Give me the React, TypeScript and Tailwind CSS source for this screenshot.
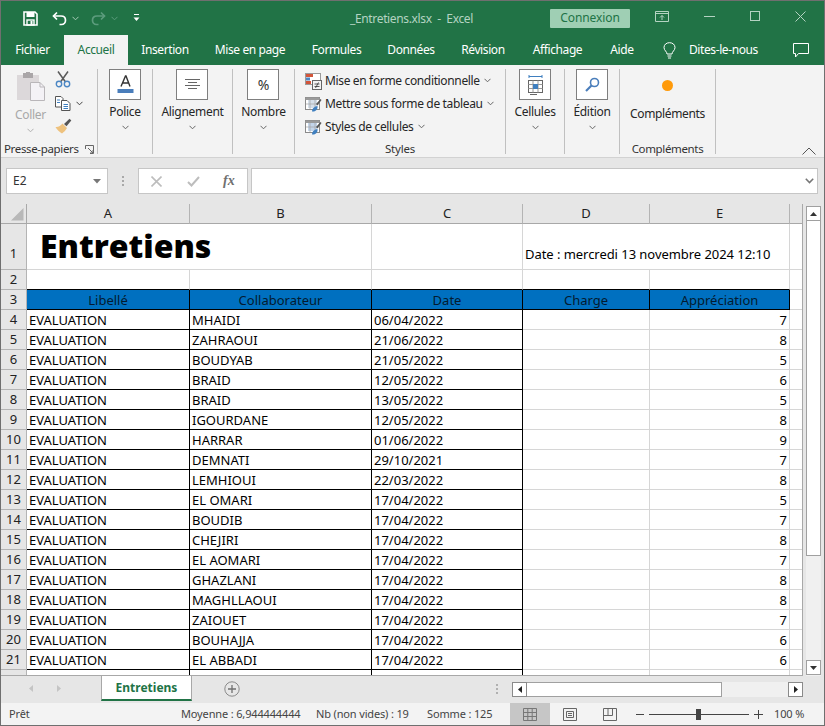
import React from "react";

const rows: [number, string, string, string, string][] = [
  [4, "EVALUATION", "MHAIDI", "06/04/2022", "7"],
  [5, "EVALUATION", "ZAHRAOUI", "21/06/2022", "8"],
  [6, "EVALUATION", "BOUDYAB", "21/05/2022", "5"],
  [7, "EVALUATION", "BRAID", "12/05/2022", "6"],
  [8, "EVALUATION", "BRAID", "13/05/2022", "5"],
  [9, "EVALUATION", "IGOURDANE", "12/05/2022", "8"],
  [10, "EVALUATION", "HARRAR", "01/06/2022", "9"],
  [11, "EVALUATION", "DEMNATI", "29/10/2021", "7"],
  [12, "EVALUATION", "LEMHIOUI", "22/03/2022", "8"],
  [13, "EVALUATION", "EL OMARI", "17/04/2022", "5"],
  [14, "EVALUATION", "BOUDIB", "17/04/2022", "7"],
  [15, "EVALUATION", "CHEJIRI", "17/04/2022", "8"],
  [16, "EVALUATION", "EL AOMARI", "17/04/2022", "7"],
  [17, "EVALUATION", "GHAZLANI", "17/04/2022", "8"],
  [18, "EVALUATION", "MAGHLLAOUI", "17/04/2022", "8"],
  [19, "EVALUATION", "ZAIOUET", "17/04/2022", "7"],
  [20, "EVALUATION", "BOUHAJJA", "17/04/2022", "6"],
  [21, "EVALUATION", "EL ABBADI", "17/04/2022", "6"],
];

const head = "flex items-center justify-center bg-[#e6e6e6] border-r border-b border-[#b4b4b4] text-[#222]";
const colHead = "flex items-center justify-center bg-[#e6e6e6] border-b border-[#a8a8a8] h-[20px] relative text-[#222] text-[13px]";
const black = "h-[20px] border-r border-b border-black px-[2px] leading-[20px] text-[13px] text-black truncate";
const light = "h-[20px] border-r border-b border-[#d6d6d6] px-[2px] leading-[20px] text-[13px] text-black text-right";
const blue = "h-[20px] border-r border-b border-black bg-[#0070c0] text-center leading-[20px] text-[13px] text-[#041b30]";

function Chevron({ color = "#666", className = "" }: { color?: string; className?: string }) {
  return (
    <svg width="7" height="5" viewBox="0 0 7 5" className={className}>
      <path d="M0.5 0.8 L3.5 3.8 L6.5 0.8" fill="none" stroke={color} strokeWidth="1" />
    </svg>
  );
}

function BoxButton({ label, children }: { label: string; children: React.ReactNode }) {
  return (
    <div className="flex flex-col items-center">
      <div className="w-[32px] h-[31px] bg-white border border-[#7f7f7f] flex items-center justify-center">{children}</div>
      <div className="mt-[4px] text-[12px] tracking-[-0.3px] leading-[16px] text-[#262626] whitespace-nowrap">{label}</div>
      <Chevron className="mt-[5px]" />
    </div>
  );
}

function StyleRow({ icon, label }: { icon: React.ReactNode; label: string }) {
  return (
    <div className="flex items-center h-[23px]">
      <div className="w-[16px] h-[16px] mr-[4px]">{icon}</div>
      <span className="text-[12px] tracking-[-0.35px] leading-[16px] text-[#262626] whitespace-nowrap">{label}</span>
      <Chevron className="ml-[4px]" />
    </div>
  );
}

function TableBrushIcon({ fill }: { fill: string }) {
  return (
    <svg width="17" height="17" viewBox="0 0 17 17">
      <rect x="0.5" y="1.5" width="14" height="12" fill="#fff" stroke="#8a8a8a" />
      <rect x="0.5" y="1.5" width="14" height="2.5" fill="#9a9a9a" />
      <rect x="3" y="4" width="9" height="8" fill={fill} />
      <path d="M5 4v9M10 4v9M1 8h13" stroke="#a5a5a5" strokeWidth="0.7" />
      <path d="M11 8 L15.5 3 L16.5 4 L12.5 9.5Z" fill="#555" />
      <path d="M7 15.5 C7 12 10 10.5 12.5 10 C13 13 11 16 7 15.5Z" fill="#3f7fbf" />
    </svg>
  );
}

export default function App() {
  return (
    <div className="w-[825px] h-[726px] border border-[#6f6f6f] flex flex-col overflow-hidden bg-[#e6e6e6] font-['Noto_Sans',sans-serif]">
      {/* Title bar */}
      <div className="h-[34px] bg-[#217346] flex items-center shrink-0">
        <div className="w-[349px] flex items-center pl-[22px]">
          <svg width="15" height="15" viewBox="0 0 15 15">
            <path d="M1 1 H12 L14 3 V14 H1Z" fill="none" stroke="#fff" strokeWidth="1.6" />
            <rect x="3.5" y="1" width="8" height="5" fill="#fff" />
            <rect x="4" y="9" width="7" height="5" fill="none" stroke="#fff" strokeWidth="1.4" />
            <rect x="7.5" y="10" width="2" height="3.5" fill="#fff" />
          </svg>
          <svg width="15" height="15" viewBox="0 0 15 15" className="ml-[14px]">
            <path d="M5 1.5 L1.5 5 L5 8.5" fill="none" stroke="#fff" strokeWidth="1.7" />
            <path d="M1.5 5 H9 C12 5 13.5 7 13.5 9.2 C13.5 11.5 12 13.5 9.5 13.5 H7.5" fill="none" stroke="#fff" strokeWidth="1.7" />
          </svg>
          <Chevron color="#a9cbb7" className="ml-[5px]" />
          <svg width="15" height="15" viewBox="0 0 15 15" className="ml-[12px]">
            <path d="M10 1.5 L13.5 5 L10 8.5" fill="none" stroke="#5c9c7d" strokeWidth="1.7" />
            <path d="M13.5 5 H6 C3 5 1.5 7 1.5 9.2 C1.5 11.5 3 13.5 5.5 13.5 H7.5" fill="none" stroke="#5c9c7d" strokeWidth="1.7" />
          </svg>
          <Chevron color="#5c9c7d" className="ml-[5px]" />
          <svg width="7" height="8" viewBox="0 0 7 8" className="ml-[15px]">
            <rect x="1" y="0" width="5" height="1" fill="#fff" />
            <path d="M0.5 3.5 H6.5 L3.5 7Z" fill="#fff" />
          </svg>
        </div>
        <div className="w-[200px] mt-[1px] text-[12px] tracking-[-0.35px] text-[#b4d3c2] whitespace-pre">_Entretiens.xlsx  -  Excel</div>
        <div className="w-[80px] h-[19px] bg-[#9fcfb4] rounded-[1px] flex items-center justify-center text-[12px] tracking-[-0.1px] text-[#217346]">Connexion</div>
        <svg width="14" height="11" viewBox="0 0 14 11" className="ml-[25px] -mt-[4px]">
          <path d="M0.5 0.5H13.5V10.5H0.5Z M0.5 2.5H13.5" fill="none" stroke="#b4d3c2" />
          <path d="M7 9V4.5M5 6.5L7 4.5L9 6.5" fill="none" stroke="#b4d3c2" />
        </svg>
        <div className="ml-[35px] w-[11px] h-[1px] -mt-[4px] bg-[#b4d3c2]" />
        <div className="ml-[35px] w-[10px] h-[10px] -mt-[4px] border border-[#b4d3c2]" />
        <svg width="11" height="11" viewBox="0 0 11 11" className="ml-[35px] -mt-[4px]">
          <path d="M0.5 0.5L10.5 10.5M10.5 0.5L0.5 10.5" stroke="#b4d3c2" />
        </svg>
      </div>

      {/* Tabs */}
      <div className="h-[30px] bg-[#217346] flex items-stretch shrink-0 text-[12px] tracking-[-0.4px] text-white">
        <div className="w-[63px] flex items-center justify-center">Fichier</div>
        <div className="w-[64px] bg-[#f3f3f3] text-[#217346] flex items-center justify-center">Accueil</div>
        <div className="w-[74px] flex items-center justify-center">Insertion</div>
        <div className="w-[96px] flex items-center justify-center">Mise en page</div>
        <div className="w-[77px] flex items-center justify-center">Formules</div>
        <div className="w-[72px] flex items-center justify-center">Données</div>
        <div className="w-[72px] flex items-center justify-center">Révision</div>
        <div className="w-[77px] flex items-center justify-center">Affichage</div>
        <div className="w-[52px] flex items-center justify-center">Aide</div>
        <div className="ml-[15px] flex items-center">
          <svg width="13" height="17" viewBox="0 0 13 17">
            <path d="M4 12 C4 9.5 1 8.5 1 5.5 C1 2.5 3.5 0.7 6.5 0.7 C9.5 0.7 12 2.5 12 5.5 C12 8.5 9 9.5 9 12Z" fill="none" stroke="#fff" />
            <path d="M4.5 14H8.5M5 16H8" stroke="#fff" />
          </svg>
        </div>
        <div className="ml-[13px] w-[71px] whitespace-nowrap flex items-center">Dites-le-nous</div>
        <div className="ml-[33px] flex items-center">
          <svg width="16" height="15" viewBox="0 0 16 15">
            <path d="M0.5 0.5H15.5V10.5H5.5L2.5 14V10.5H0.5Z" fill="none" stroke="#fff" />
          </svg>
        </div>
      </div>

      {/* Ribbon */}
      <div className="h-[93px] shrink-0 bg-[#f3f3f3] border-b border-[#d2d2d2] flex items-start pt-[4px]">
        <div className="w-[97px] h-[85px] border-r border-[#c0c0c0] flex flex-col shrink-0">
          <div className="flex">
            <div className="w-[53px] pl-[6px] flex flex-col items-center pt-[3px]">
              <svg width="29" height="29" viewBox="0 0 29 29">
                <rect x="1" y="3" width="22" height="25" fill="#dcd8da" />
                <rect x="7" y="1" width="10" height="5" fill="#aaa6a8" />
                <rect x="10" y="0" width="4" height="2" fill="#aaa6a8" />
                <path d="M14.5 10.5H24L28.5 15V28.5H14.5Z" fill="#f4f2f6" stroke="#b9b6b9" />
                <path d="M24 10.5V15H28.5" fill="none" stroke="#b9b6b9" />
              </svg>
              <div className="mt-[6px] text-[12px] tracking-[-0.3px] leading-[16px] text-[#a8a8a8]">Coller</div>
              <Chevron color="#b0b0b0" className="mt-[5px]" />
            </div>
            <div className="flex flex-col pt-[2px] pl-[1px]">
              <svg width="16" height="17" viewBox="0 0 16 17">
                <path d="M3 0.5L10.5 11M13 0.5L5.5 11" stroke="#5a5a5a" strokeWidth="1.5" />
                <circle cx="4" cy="13" r="2.7" fill="none" stroke="#4c87c4" strokeWidth="1.4" />
                <circle cx="12" cy="13" r="2.7" fill="none" stroke="#4c87c4" strokeWidth="1.4" />
              </svg>
              <div className="flex items-center mt-[8px]">
                <svg width="16" height="15" viewBox="0 0 16 15">
                  <path d="M0.5 0.5H6L8 2.5V11H0.5Z" fill="#fff" stroke="#555" />
                  <path d="M6.5 4.5H12L15 7.5V14.5H6.5Z" fill="#fff" stroke="#555" />
                  <path d="M2 4H5M2 6.5H5M8.5 8.5H13M8.5 10.5H13M8.5 12.5H13" stroke="#3f7fbf" />
                </svg>
                <Chevron color="#444" className="ml-[5px]" />
              </div>
              <svg width="17" height="16" viewBox="0 0 17 16" className="mt-[7px]">
                <path d="M9 6 L14.5 0.8 L16.3 2.6 L11.5 8.3Z" fill="#555" />
                <path d="M0.5 9 C3 9.5 6 7.5 7.5 5.5 L12 10 C10.5 12.5 9 14 7 15.5 C4.5 14 2 12 0.5 9Z" fill="#eec27e" />
              </svg>
            </div>
          </div>
          <div className="mt-auto -mb-[3px] pl-[3px] flex items-center justify-between pr-[3px] text-[11.5px] tracking-[-0.35px] leading-[16px] text-[#333]">
            <span>Presse-papiers</span>
            <svg width="9" height="9" viewBox="0 0 9 9">
              <path d="M0.5 4V0.5H8.5V8.5H5M3 3L8 8M8 5V8H5" fill="none" stroke="#666" />
            </svg>
          </div>
        </div>

        <div className="w-[55px] h-[85px] border-r border-[#c0c0c0] flex justify-center shrink-0">
          <BoxButton label="Police">
            <svg width="17" height="19" viewBox="0 0 17 19">
              <path d="M4 11.5L8.5 1H9L13 11.5M5.5 8H11.8" fill="none" stroke="#333" strokeWidth="1.4" />
              <rect x="0.5" y="14" width="16" height="4" fill="#4a7ebb" />
            </svg>
          </BoxButton>
        </div>
        <div className="w-[80px] h-[85px] border-r border-[#c0c0c0] flex justify-center shrink-0">
          <BoxButton label="Alignement">
            <svg width="15" height="11" viewBox="0 0 15 11">
              <path d="M0 0.5H15M3 3.5H12M0 6.5H15M3 9.5H12" stroke="#666" />
            </svg>
          </BoxButton>
        </div>
        <div className="w-[62px] h-[85px] border-r border-[#c0c0c0] flex justify-center shrink-0">
          <BoxButton label="Nombre">
            <span className="text-[14px] leading-none text-[#333]">%</span>
          </BoxButton>
        </div>

        <div className="w-[211px] h-[85px] border-r border-[#c0c0c0] flex flex-col shrink-0 pl-[10px]">
          <StyleRow
            label="Mise en forme conditionnelle"
            icon={
              <svg width="17" height="17" viewBox="0 0 17 17">
                <rect x="0.5" y="0.5" width="15" height="11" fill="#fff" stroke="#9a9a9a" />
                <rect x="1" y="1" width="7" height="3" fill="#d2553a" />
                <rect x="1" y="4.5" width="4" height="3" fill="#4c87c4" />
                <rect x="1" y="8" width="5" height="3" fill="#d2553a" />
                <rect x="7.5" y="7.5" width="9" height="9" fill="#f3f3f3" stroke="#666" />
                <path d="M9.5 11H14.5M9.5 13.5H14.5M13.5 9.5L10.5 15" stroke="#333" strokeWidth="0.8" />
              </svg>
            }
          />
          <StyleRow label="Mettre sous forme de tableau" icon={<TableBrushIcon fill="#d5dfea" />} />
          <StyleRow label="Styles de cellules" icon={<TableBrushIcon fill="#c3d5ea" />} />
          <div className="mt-auto -mb-[3px] -ml-[10px] text-center text-[11.5px] tracking-[-0.2px] leading-[16px] text-[#333]">Styles</div>
        </div>

        <div className="w-[59px] h-[85px] border-r border-[#c0c0c0] flex justify-center shrink-0">
          <BoxButton label="Cellules">
            <svg width="15" height="21" viewBox="0 0 15 21">
              <path d="M1 1V4M14 1V4M1 2.5H14" stroke="#3f7fbf" />
              <rect x="0.5" y="6.5" width="14" height="12" fill="#fff" stroke="#666" />
              <path d="M0.5 10.5H14.5M0.5 14.5H14.5M5 6.5V18.5M10 6.5V18.5" stroke="#999" />
              <rect x="5" y="10" width="5" height="5" fill="#3f7fbf" />
              <path d="M2 20.5H9" stroke="#666" />
            </svg>
          </BoxButton>
        </div>
        <div className="w-[55px] h-[85px] border-r border-[#c0c0c0] flex justify-center shrink-0">
          <BoxButton label="Édition">
            <svg width="15" height="15" viewBox="0 0 15 15">
              <circle cx="9.5" cy="5.5" r="4" fill="none" stroke="#4a7ebb" strokeWidth="1.6" />
              <path d="M6.5 8.5L1 14" stroke="#4a7ebb" strokeWidth="2.2" />
            </svg>
          </BoxButton>
        </div>
        <div className="w-[96px] h-[85px] border-r border-[#c0c0c0] flex flex-col items-center shrink-0">
          <div className="mt-[11px] w-[11px] h-[11px] rounded-full bg-[#ff9a0a] blur-[0.5px]" />
          <div className="mt-[15px] text-[12px] tracking-[-0.35px] leading-[16px] text-[#262626]">Compléments</div>
          <div className="mt-auto -mb-[3px] text-[11.5px] tracking-[-0.35px] leading-[16px] text-[#333]">Compléments</div>
        </div>
        <div className="flex-1 h-[85px] flex items-end justify-end pr-[8px]">
          <svg width="14" height="8" viewBox="0 0 14 8" className="-mb-[1px]">
            <path d="M0.5 7.5L7 1L13.5 7.5" fill="none" stroke="#555" />
          </svg>
        </div>
      </div>

      {/* Formula bar */}
      <div className="h-[46px] shrink-0 bg-[#e6e6e6] flex items-start pt-[10px] pl-[5px]">
        <div className="w-[102px] h-[26px] bg-white border border-[#c6c6c6] flex items-center pl-[6px] pr-[6px] justify-between text-[12px] text-[#333]">
          <span>E2</span>
          <svg width="8" height="5" viewBox="0 0 8 5"><path d="M0 0H8L4 4.5Z" fill="#777" /></svg>
        </div>
        <div className="w-[30px] h-[26px] flex flex-col items-center justify-center gap-[2px] pr-[1px]">
          <div className="w-[2px] h-[2px] bg-[#a8a8a8]" />
          <div className="w-[2px] h-[2px] bg-[#a8a8a8]" />
          <div className="w-[2px] h-[2px] bg-[#a8a8a8]" />
        </div>
        <div className="w-[110px] h-[26px] bg-white border border-[#c6c6c6] flex items-center pl-[12px]">
          <svg width="11" height="11" viewBox="0 0 11 11"><path d="M0.5 0.5L10.5 10.5M10.5 0.5L0.5 10.5" stroke="#bdbdbd" strokeWidth="1.6" /></svg>
          <svg width="13" height="11" viewBox="0 0 13 11" className="ml-[25px]"><path d="M1 6L4.5 9.5L12 1" fill="none" stroke="#bdbdbd" strokeWidth="2" /></svg>
          <span className="ml-[23px] font-['Liberation_Serif',serif] italic font-bold text-[14px] leading-none text-[#707070]">fx</span>
        </div>
        <div className="w-[567px] h-[26px] ml-[3px] bg-white border border-[#c6c6c6] flex items-center justify-end pr-[3px]">
          <svg width="9" height="6" viewBox="0 0 9 6"><path d="M0.8 0.8L4.5 4.5L8.2 0.8" fill="none" stroke="#777" strokeWidth="1.6" /></svg>
        </div>
      </div>

      {/* Sheet + scrollbar */}
      <div className="h-[472px] shrink-0 flex items-start">
        <div className="w-[802px] h-[472px] bg-white border-r border-b border-[#a8a8a8] overflow-hidden shrink-0">
          <div className="grid grid-cols-[26px_163px_182px_151px_127px_140px_14px]">
            <div className="h-[20px] bg-[#e6e6e6] border-r border-b border-[#a8a8a8] flex items-end justify-end pr-[2px] pb-[2px]">
              <svg width="13" height="13" viewBox="0 0 13 13"><path d="M12.5 0V12.5H0Z" fill="#b8b8b8" /></svg>
            </div>
            <div className={`${colHead} border-r border-r-[#b4b4b4]`}>A</div>
            <div className={`${colHead} border-r border-r-[#b4b4b4]`}>B</div>
            <div className={`${colHead} border-r border-r-[#b4b4b4]`}>C</div>
            <div className={`${colHead} border-r border-r-[#b4b4b4]`}>D</div>
            <div className={`${colHead} border-r border-r-[#b4b4b4]`}>E</div>
            <div className={colHead} />

            {/* Row 1 */}
            <div className={`${head} h-[46px] items-end pb-[6px] text-[13px]`}>1</div>
            <div className="col-span-2 h-[46px] border-r border-b border-[#d6d6d6] pl-[13px] font-['Open_Sans',sans-serif] font-extrabold text-[32px] leading-[44px] text-black">Entretiens</div>
            <div className="h-[46px] border-r border-b border-[#d6d6d6]" />
            <div className="col-span-2 h-[46px] border-r border-b border-[#d6d6d6] flex items-end pb-[6px] pl-[2px] text-[13px] tracking-[-0.05px] leading-[18px] text-black whitespace-nowrap">Date : mercredi 13 novembre 2024 12:10</div>
            <div className="h-[46px] border-b border-[#d6d6d6]" />

            {/* Row 2 */}
            <div className={`${head} h-[20px] text-[13px]`}>2</div>
            <div className="h-[20px] border-r border-b border-r-[#d6d6d6] border-b-black" />
            <div className="h-[20px] border-r border-b border-r-[#d6d6d6] border-b-black" />
            <div className="h-[20px] border-r border-b border-r-[#d6d6d6] border-b-black" />
            <div className="h-[20px] border-r border-b border-r-[#d6d6d6] border-b-black" />
            <div className="h-[20px] border-r border-b border-r-[#d6d6d6] border-b-black" />
            <div className="h-[20px] border-b border-[#d6d6d6]" />

            {/* Row 3 */}
            <div className={`${head} h-[20px] text-[13px]`}>3</div>
            <div className={blue}>Libellé</div>
            <div className={blue}>Collaborateur</div>
            <div className={blue}>Date</div>
            <div className={blue}>Charge</div>
            <div className={blue}>Appréciation</div>
            <div className="h-[20px] border-b border-[#d6d6d6]" />

            {rows.map(([n, a, b, c, e]) => (
              <React.Fragment key={n}>
                <div className={`${head} h-[20px] text-[13px]`}>{n}</div>
                <div className={black}>{a}</div>
                <div className={black}>{b}</div>
                <div className={black}>{c}</div>
                <div className={light} />
                <div className={light}>{e}</div>
                <div className="h-[20px] border-b border-[#d6d6d6]" />
              </React.Fragment>
            ))}
            {/* Row 22: only the top few pixels are in view */}
            <div className={`${head} h-[20px]`} />
            <div className={black} />
            <div className={black} />
            <div className={black}>
              <span className="text-[#c0500a]">17/04/2022</span>
            </div>
            <div className={light} />
            <div className={light} />
            <div className="h-[20px] border-b border-[#d6d6d6]" />
          </div>
        </div>

        <div className="w-[15px] h-[471px] ml-[3px] flex flex-col mt-[2px] bg-[#f0f0f0]">
          <div className="h-[15px] shrink-0 bg-white border border-[#a0a0a0] flex items-center justify-center">
            <svg width="7" height="4" viewBox="0 0 7 4"><path d="M0 4L3.5 0L7 4Z" fill="#333" /></svg>
          </div>
          <div className="h-[335px] shrink-0 bg-white border-x border-b border-[#a0a0a0]" />
          <div className="flex-1" />
          <div className="h-[15px] shrink-0 -mt-[2px] mb-[2px] bg-white border border-[#a0a0a0] flex items-center justify-center">
            <svg width="7" height="4" viewBox="0 0 7 4"><path d="M0 0L3.5 4L7 0Z" fill="#333" /></svg>
          </div>
        </div>
      </div>

      {/* Sheet tabs */}
      <div className="h-[27px] shrink-0 bg-[#e6e6e6] flex items-start">
        <div className="w-[100px] h-[25px] flex items-center pl-[28px]">
          <svg width="4" height="7" viewBox="0 0 4 7"><path d="M4 0L0 3.5L4 7Z" fill="#c4c4c4" /></svg>
          <svg width="4" height="7" viewBox="0 0 4 7" className="ml-[24px]"><path d="M0 0L4 3.5L0 7Z" fill="#c4c4c4" /></svg>
        </div>
        <div className="w-[91px] h-[25px] pt-[1px] bg-white border-x border-[#a8a8a8] border-b-2 border-b-[#217346] flex items-center justify-center text-[12px] font-bold text-[#217346]">Entretiens</div>
        <div className="ml-[32px] h-[25px] flex items-center">
          <svg width="16" height="16" viewBox="0 0 16 16">
            <circle cx="8" cy="8" r="7.2" fill="none" stroke="#8a8a8a" />
            <path d="M8 4V12M4 8H12" stroke="#707070" strokeWidth="1.3" />
          </svg>
        </div>
        <div className="ml-[256px] h-[25px] w-[2px] flex flex-col items-center justify-center gap-[2px]">
          <div className="w-[2px] h-[2px] bg-[#b0b0b0]" />
          <div className="w-[2px] h-[2px] bg-[#b0b0b0]" />
          <div className="w-[2px] h-[2px] bg-[#b0b0b0]" />
        </div>
        <div className="ml-[14px] mt-[6px] w-[291px] h-[15px] bg-[#f0f0f0] flex">
          <div className="w-[15px] h-[15px] bg-white border border-[#8a8a8a] flex items-center justify-center">
            <svg width="4" height="7" viewBox="0 0 4 7"><path d="M4 0L0 3.5L4 7Z" fill="#222" /></svg>
          </div>
          <div className="w-[195px] h-[15px] bg-white border-y border-r border-[#a0a0a0]" />
          <div className="flex-1" />
          <div className="w-[15px] h-[15px] bg-white border border-[#8a8a8a] flex items-center justify-center">
            <svg width="4" height="7" viewBox="0 0 4 7"><path d="M0 0L4 3.5L0 7Z" fill="#222" /></svg>
          </div>
        </div>
      </div>

      {/* Status bar */}
      <div className="h-[22px] shrink-0 bg-[#f3f3f3] flex items-center text-[11px] tracking-[-0.15px] text-[#444]">
        <div className="w-[180px] pl-[8px] pt-[1px]">Prêt</div>
        <div className="w-[135px] pt-[1px] whitespace-nowrap">Moyenne : 6,944444444</div>
        <div className="w-[111px] pt-[1px] whitespace-nowrap">Nb (non vides) : 19</div>
        <div className="w-[83px] pt-[1px] whitespace-nowrap">Somme : 125</div>
        <div className="w-[40px] h-[22px] bg-[#c6c6c6] flex items-center justify-center">
          <svg width="14" height="13" viewBox="0 0 14 13"><path d="M0.5 0.5H13.5V12.5H0.5ZM0.5 4.5H13.5M0.5 8.5H13.5M4.8 0.5V12.5M9.2 0.5V12.5" fill="none" stroke="#777" /></svg>
        </div>
        <div className="w-[40px] flex items-center justify-center">
          <svg width="14" height="13" viewBox="0 0 14 13"><path d="M0.5 0.5H13.5V12.5H0.5ZM3.5 3.5H10.5V9.5H3.5ZM5 5.5H9M5 7.5H9" fill="none" stroke="#666" /></svg>
        </div>
        <div className="w-[40px] flex items-center justify-center">
          <svg width="14" height="13" viewBox="0 0 14 13"><path d="M0.5 0.5H13.5V12.5H0.5ZM0.5 7.5H9.5V0.5M5 0.5V7.5" fill="none" stroke="#666" /></svg>
        </div>
        <div className="ml-[6px] w-[8px] h-[1px] bg-[#444]" />
        <div className="ml-[5px] w-[100px] h-[1px] bg-[#444] flex items-center">
          <div className="ml-[47px] w-[5px] h-[11px] bg-[#444]" />
        </div>
        <svg width="9" height="9" viewBox="0 0 9 9" className="ml-[5px]"><path d="M0 4.5H9M4.5 0V9" stroke="#444" /></svg>
        <div className="ml-[11px] whitespace-nowrap">100 %</div>
      </div>
    </div>
  );
}
